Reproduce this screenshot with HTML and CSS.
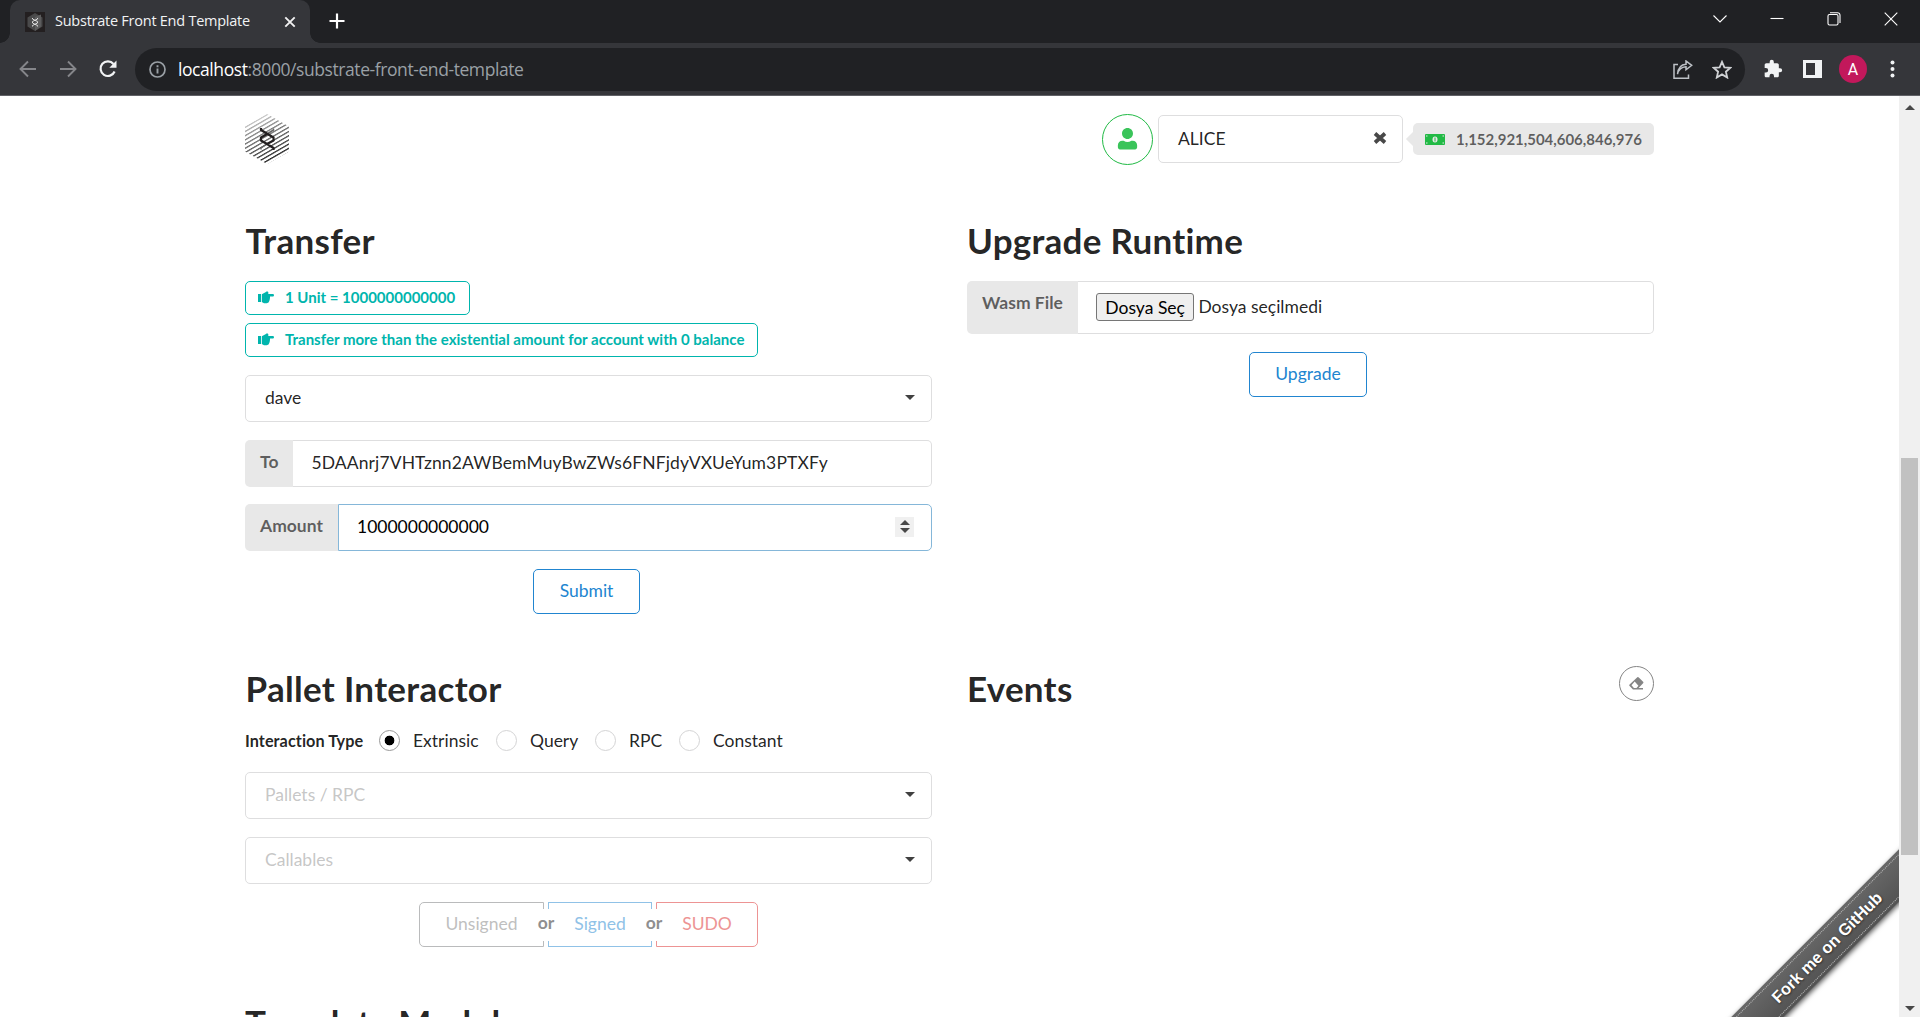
FILE: index.html
```html
<!DOCTYPE html>
<html lang="en">
<head>
<meta charset="utf-8">
<title>Substrate Front End Template</title>
<link rel="stylesheet" href="styles.css">
</head>
<body>
<div class="browser">
  <header class="tabstrip">
    <div class="tab">
      <svg class="favicon" viewBox="0 0 20 20"><rect width="20" height="20" fill="#231f20"/><path d="M10 1l7.500 4.500v9L10 19l-7.500-4.500v-9z" fill="#4a4a4b"/><path d="M10 5l6-2.500v12L10 19z" fill="#5c5c5d"/><path d="M7.500 6v1l5 2.500v1.500l-5 2.500v1M12.500 6v1l-5 2.500v1.500l5 2.500v1" fill="none" stroke="#ddd"/></svg>
      <span class="tab-title">Substrate Front End Template</span>
      <svg class="tab-close" viewBox="0 0 12 12"><path d="M1.300 1.300l9.400 9.400M10.700 1.300l-9.400 9.400" stroke="#f1f1f1" stroke-width="1.900"/></svg>
    </div>
    <svg class="new-tab" viewBox="0 0 16 16"><path d="M8 .5v15M.5 8h15" stroke="#fff" stroke-width="2.200"/></svg>
    <div class="window-controls">
      <svg width="14" height="14" viewBox="0 0 14 14"><path d="M.5 3.500L7 10l6.500-6.500"/></svg>
      <svg width="14" height="14" viewBox="0 0 14 14"><path d="M.5 6.500h13"/></svg>
      <svg width="14" height="14" viewBox="0 0 14 14"><rect x="1" y="2.500" width="10" height="10.500" rx="1.500"/><path d="M3 .7h7.500a2.500 2.500 0 0 1 2.500 2.500V11"/></svg>
      <svg width="14" height="14" viewBox="0 0 14 14"><path d="M.7.700l12.600 12.600M13.300.7L.7 13.300"/></svg>
    </div>
  </header>
  <nav class="toolbar">
    <svg class="nav-arrow" viewBox="0 0 18 18"><path d="M17 9H2M9 1.500L1.500 9 9 16.500"/></svg>
    <svg class="nav-arrow" viewBox="0 0 18 18"><path d="M1 9h15M9 1.500L16.500 9 9 16.500"/></svg>
    <svg class="reload" viewBox="0 0 18 18"><path d="M15.600 11.500A7.300 7.300 0 1 1 14.500 4" fill="none" stroke="#f1f3f4" stroke-width="2.200"/><path d="M17.500.5v7.200h-7.200z" fill="#f1f3f4"/></svg>
    <div class="omnibox">
      <svg class="info" viewBox="0 0 17 17"><circle cx="8.500" cy="8.500" r="7.500" fill="none" stroke="#9aa0a6" stroke-width="1.700"/><path d="M8.500 7.500v5M8.500 4.200v2" stroke="#9aa0a6" stroke-width="1.900"/></svg>
      <span class="url"><b>localhost</b>:8000/substrate-front-end-template</span>
      <svg class="share" viewBox="0 0 20 19"><path d="M5 4.500H1v13.700h14.500v-3.700M4.500 14.200C5.500 9 8.500 7 13 6.700V9.800L18.700 5.300 13 1v3.200C8 4.500 5 8.500 4.500 14.200z"/></svg>
      <svg class="star" viewBox="0 0 20 19"><path d="M10 1.800l2.400 5.500 6 .5-4.500 3.900 1.300 5.800L10 14.400l-5.200 3.100 1.300-5.800L1.600 7.800l6-.5z"/></svg>
    </div>
    <svg class="puzzle" viewBox="0 0 24 24"><path d="M20.500 11H19V7c0-1.100-.9-2-2-2h-4V3.500a2.500 2.500 0 0 0-5 0V5H4c-1.100 0-2 .9-2 2v3.800h1.500a2.700 2.700 0 0 1 0 5.400H2V20c0 1.100.9 2 2 2h3.800v-1.500a2.700 2.700 0 0 1 5.400 0V22H17c1.100 0 2-.9 2-2v-4h1.500a2.500 2.500 0 0 0 0-5z"/></svg>
    <svg class="panel" viewBox="0 0 19 18"><path d="M0 0h19v18H0zM3 3v12h9V3z" fill-rule="evenodd"/></svg>
    <span class="avatar">A</span>
    <svg class="menu" viewBox="0 0 5 18"><circle cx="2.500" cy="2.500" r="2"/><circle cx="2.500" cy="9" r="2"/><circle cx="2.500" cy="15.500" r="2"/></svg>
  </nav>
  <div class="viewport">
    <main class="page">
      <div class="account-bar">
        <svg class="logo" viewBox="0 0 44 50">
          <defs>
            <clipPath id="hex"><path d="M22 0l22 12.500v25L22 50 0 37.500v-25z"/></clipPath>
            <linearGradient id="fade" x1="0" y1="0" x2=".4" y2="1"><stop offset=".1" stop-color="#ddd"/><stop offset=".4" stop-color="#888"/><stop offset="1" stop-color="#222"/></linearGradient>
            <pattern id="hatch" width="44" height="4.200" patternUnits="userSpaceOnUse" patternTransform="skewY(-30)"><rect width="44" height="1.500" fill="#fff"/></pattern>
            <mask id="lines"><rect width="44" height="50" fill="url(#hatch)"/></mask>
          </defs>
          <g clip-path="url(#hex)"><rect width="44" height="50" fill="url(#fade)" mask="url(#lines)"/></g>
          <path d="M28.500 14.500v1.500L22 20M22 30l-6 4v1.500" fill="none" stroke="#666" stroke-width="1.500"/>
          <path d="M16 14v2l12.500 7.500v3L22 30l6.500 4v2M22 20l-6 3.500v3L22 30" fill="none" stroke="#231f20" stroke-width="2.300" stroke-linejoin="round"/>
        </svg>
        <span class="user-button"><svg viewBox="0 0 448 512"><path d="M224 256c71 0 128-57 128-128S295 0 224 0 96 57 96 128s57 128 128 128zm120 40h-30a174 174 0 0 1-180 0h-30C45 296 0 340 0 400v50c0 27 21 48 48 48h352c27 0 48-21 48-48v-50c0-60-45-104-104-104z"/></svg></span>
        <div class="account-select">ALICE<svg viewBox="0 0 14 12"><path d="M2 1.500l10 9M12 1.500l-10 9" stroke="#484848" stroke-width="3.700"/></svg></div>
        <div class="balance"><svg viewBox="0 0 20 11"><rect width="20" height="11" rx="1" fill="#21ba45"/><ellipse cx="10" cy="5.500" rx="2.500" ry="3" fill="#e8e8e8"/><path d="M10 3.500v4M2 2h1M17 2h1M2 9h1M17 9h1" stroke="#21ba45"/><path d="M1 2h1.500M17.500 2H19M1 9h1.500M17.500 9H19" stroke="#e8e8e8"/></svg>1,152,921,504,606,846,976</div>
      </div>

      <div class="grid">
        <section class="transfer">
          <h1>Transfer</h1>
          <div class="hints">
            <div class="hint"><svg viewBox="0 0 16 13"><path d="M0 3h3v8H0zM3.800 3.200L7.500 1.200 9 .3l1.300.8V3h4.900q.8.200.8 1.200t-.8 1.300H12v1l-.2 1.700-.5 1.700-.8 1.600-1.700.8H6L3.800 11z"/></svg>1 Unit = 1000000000000</div>
            <div class="hint tight"><svg viewBox="0 0 16 13"><path d="M0 3h3v8H0zM3.800 3.200L7.500 1.200 9 .3l1.300.8V3h4.900q.8.200.8 1.200t-.8 1.300H12v1l-.2 1.700-.5 1.700-.8 1.600-1.700.8H6L3.800 11z"/></svg>Transfer more than the existential amount for account with 0 balance</div>
          </div>
          <div class="fields">
            <div class="dropdown"><span>dave</span><i class="caret"></i></div>
            <div class="labeled"><span class="field-label">To</span><div class="field address">5DAAnrj7VHTznn2AWBemMuyBwZWs6FNFjdyVXUeYum3PTXFy</div></div>
            <div class="labeled"><span class="field-label">Amount</span><div class="field focused">1000000000000<span class="spinner"><i class="up"></i><i class="down"></i></span></div></div>
          </div>
          <div class="actions"><span class="button submit">Submit</span></div>
        </section>
        <section class="upgrade">
          <h1>Upgrade Runtime</h1>
          <div class="labeled file"><span class="field-label">Wasm File</span><div class="field"><span class="choose">Dosya Seç</span>Dosya seçilmedi</div></div>
          <div class="actions"><span class="button upgrade-button">Upgrade</span></div>
        </section>
        <section class="interactor">
          <h1>Pallet Interactor</h1>
          <div class="radios"><b>Interaction Type</b>
            <span class="radio checked r1">Extrinsic</span><span class="radio r2">Query</span><span class="radio r3">RPC</span><span class="radio">Constant</span></div>
          <div class="fields">
            <div class="dropdown empty"><span>Pallets / RPC</span><i class="caret"></i></div>
            <div class="dropdown empty"><span>Callables</span><i class="caret"></i></div>
          </div>
          <div class="group"><span class="choice unsigned">Unsigned</span><span class="or">or</span><span class="choice signed">Signed</span><span class="or">or</span><span class="choice sudo">SUDO</span></div>
        </section>
        <section class="events">
          <h1>Events</h1>
          <span class="clear"><svg viewBox="0 0 15 13"><path d="M8.300.3q.8-.5 1.500.2l4.300 4.300q.7.700 0 1.400L9.600 11H14v1.500H4L.6 9.100q-.7-.8 0-1.500zM5.700 4.600L2.500 8.300 4.900 11h2.600l1.900-2.200z" fill-rule="evenodd"/></svg></span>
        </section>
        <section class="template"><h1>Template Module</h1></section>
      </div>
      <div class="ribbon"><span>Fork me on GitHub</span></div>
    </main>
    <aside class="scrollbar"><i class="up"></i><div class="thumb"></div><i class="down"></i></aside>
  </div>
</div>
</body>
</html>
```
FILE: styles.css
```css
* { box-sizing: border-box; }
body { margin: 0; overflow: hidden; background: #fff; font: 17.5px/25px Lato, "Liberation Sans", sans-serif; color: rgba(0,0,0,.87); }
svg { display: block; flex: none; }
.browser { height: 1017px; display: flex; flex-direction: column; overflow: hidden; }

/* Browser chrome */
.tabstrip { height: 43px; flex: none; background: #202124; display: flex; padding-left: 10px; font-family: "Open Sans", sans-serif; }
.tab { width: 300px; background: #35363a; border-radius: 10px 10px 0 0; display: flex; align-items: center; padding: 0 14px 0 15px; position: relative; }
.tab::before, .tab::after { content: ""; position: absolute; bottom: 0; width: 10px; height: 10px; }
.tab::before { left: -10px; background: radial-gradient(circle at 0 0, transparent 9.500px, #35363a 10px); }
.tab::after { right: -10px; background: radial-gradient(circle at 100% 0, transparent 9.500px, #35363a 10px); }
.favicon { width: 20px; height: 20px; }
.tab-title { width: 200px; margin-left: 10px; padding-bottom: 2px; font-size: 14.500px; letter-spacing: -.25px; color: #f1f3f4; white-space: nowrap; }
.tab-close { width: 12px; height: 12px; margin-left: 29px; }
.new-tab { width: 16px; height: 16px; margin: 13px 0 0 19px; }
.window-controls { margin: 12px 22px 0 auto; display: flex; gap: 43px; }
.window-controls svg { fill: none; stroke: #fff; stroke-width: 1.100; }
.toolbar { height: 53px; flex: none; background: #35363a; border-bottom: 1px solid #606166; display: flex; align-items: center; padding: 0 25px 0 19px; }
.nav-arrow { width: 18px; height: 18px; margin-right: 22px; fill: none; stroke: #85868a; stroke-width: 1.900; }
.reload { width: 18px; height: 18px; }
.omnibox { width: 1610px; height: 43px; margin-left: 18px; border-radius: 22px; background: #202124; display: flex; align-items: center; padding: 0 13px 0 14px; color: #9aa0a6; font-family: "Open Sans", sans-serif; }
.info { width: 17px; height: 17px; }
.url { margin-left: 12px; font-size: 17.500px; letter-spacing: -.42px; white-space: nowrap; }
.url b { color: #fff; font-weight: 400; }
.share { width: 20px; height: 19px; margin-left: auto; fill: none; stroke: #bdc1c6; stroke-width: 1.500; }
.star { width: 20px; height: 19px; margin-left: 19px; fill: none; stroke: #d0d2d5; stroke-width: 1.800; }
.puzzle { width: 20px; height: 20px; margin-left: 18px; fill: #f1f3f4; }
.panel { width: 19px; height: 18px; margin-left: 20px; fill: #f1f3f4; }
.avatar { width: 28px; height: 28px; margin-left: 17px; border-radius: 50%; background: #c2185b; color: #fff; text-align: center; font: 16px/29px Roboto, sans-serif; }
.menu { width: 5px; height: 18px; margin-left: auto; fill: #f1f3f4; }

.viewport { display: flex; flex: 1; min-height: 0; }
.page { width: 1899px; padding-left: 245px; position: relative; overflow: hidden; }
.scrollbar { width: 21px; background: #f0f0f0; display: flex; flex-direction: column; align-items: center; }
.up, .down { border: 5px solid transparent; width: 0; height: 0; }
.up { border-top: 0; border-bottom-color: #484848; }
.down { border-bottom: 0; border-top-color: #484848; }
.scrollbar .up { margin-top: 9px; }
.scrollbar .down { margin-top: auto; margin-bottom: 6px; }
.thumb { width: 17px; height: 397px; margin-top: 348px; background: #c1c1c1; }

/* Account header */
.account-bar { width: 1409px; height: 86px; display: flex; align-items: center; }
.logo { width: 44px; height: 50px; }
.user-button { width: 51px; height: 51px; margin-left: 813px; border: 1.500px solid #21ba45; border-radius: 50%; display: grid; place-items: center; }
.user-button svg { width: 21px; height: 22px; fill: #3ac45a; }
.account-select { width: 245px; height: 48px; margin-left: 5px; border: 1px solid #dededf; border-radius: 5px; display: flex; align-items: center; justify-content: space-between; padding: 0 15px 2px 19px; }
.account-select svg { width: 14px; height: 12px; }
.balance { position: relative; width: 241px; height: 32px; margin-left: 10px; border-radius: 5px; background: #e8e8e8; display: flex; align-items: center; gap: 11px; padding-left: 12px; font-size: 15px; font-weight: 700; letter-spacing: -.02px; color: rgba(0,0,0,.6); }
.balance::before { content: ""; position: absolute; left: -5px; top: 11px; width: 10px; height: 10px; background: #e8e8e8; transform: rotate(45deg); }
.balance svg { width: 20px; height: 11px; }

/* Content */
.grid { display: grid; grid-template-columns: 687px 687px; grid-template-rows: 448px 334px 80px; column-gap: 35px; padding-top: 38px; }
h1 { margin: -2px 0 0; padding-bottom: 2px; font-size: 35px; line-height: 45px; font-weight: 700; letter-spacing: .25px; }
section { position: relative; display: flow-root; }
.transfer h1, .interactor h1 { padding-left: .5px; letter-spacing: .3px; }
.hints { display: flex; flex-direction: column; align-items: flex-start; gap: 8px; margin-top: 16px; }
.hint { height: 34px; border: 1px solid #00b5ad; border-radius: 5px; color: #00b5ad; font-size: 15px; font-weight: 700; display: flex; align-items: center; gap: 11px; padding: 0 14px 2px 12px; white-space: nowrap; }
.hint.tight { padding-right: 12.500px; letter-spacing: .015px; }
.hint svg { width: 16px; height: 13px; fill: #00b5ad; }
.fields { display: flex; flex-direction: column; gap: 18px; margin-top: 18px; }
.transfer .fields { gap: 17.500px; }
.dropdown { height: 47px; border: 1px solid #dededf; border-radius: 5px; display: flex; align-items: center; justify-content: space-between; padding: 0 16px 2px 19px; }
.dropdown.empty { color: rgba(191,191,191,.9); }
.caret { border: 5px solid transparent; border-top-color: #404040; border-bottom: 0; }
.labeled { height: 47px; display: flex; }
.field-label { background: #e8e8e8; border-radius: 5px 0 0 5px; padding: 9px 15px; font-weight: 700; color: rgba(0,0,0,.6); white-space: nowrap; }
.field { flex: 1; border: 1px solid #dededf; border-left: 0; border-radius: 0 5px 5px 0; display: flex; align-items: center; padding: 0 17px 2px 19px; white-space: nowrap; }
.field.address { letter-spacing: .12px; padding-left: 18px; }
.field.focused { border: 1px solid #85b7d9; color: #000; padding-left: 18px; }
.spinner { width: 19px; height: 20px; margin-left: auto; background: #f0f0f0; display: flex; flex-direction: column; align-items: center; justify-content: center; gap: 3px; }
.actions { display: flex; margin-top: 18px; }
.button { height: 45px; border: 1.500px solid #2185d0; border-radius: 5px; color: #2185d0; text-align: center; line-height: 41px; }
.submit { width: 107px; margin-left: 288px; }
.upgrade-button { width: 118px; margin-left: 282px; }
.file { height: 53px; margin-top: 16px; }
.file .field { padding-left: 18px; }
.choose { height: 28px; border: 1px solid #767676; border-radius: 3px; background: #efefef; color: #000; padding: 0 8.500px; margin-right: 4px; line-height: 28px; }

.radios { height: 25px; margin-top: 15px; display: flex; align-items: center; }
.radios b { width: 134px; font-size: 16.250px; letter-spacing: .05px; white-space: nowrap; }
.radio { display: flex; align-items: center; gap: 13px; }
.radio::before { content: ""; width: 19px; height: 19px; border: 1px solid #d4d4d5; border-radius: 50%; }
.radio.checked::before { border-color: #999; background: radial-gradient(circle, #000 4.500px, #fff 5.200px); }
.r1 { width: 117px; } .r2 { width: 99px; } .r3 { width: 84px; }
.interactor .fields { margin-top: 19px; }
.group { display: flex; margin: 18px 0 0 174px; }
.choice { height: 45px; border: 1.500px solid #babbbc; line-height: 41px; text-align: center; }
.unsigned { width: 125px; border-radius: 5px 0 0 5px; color: #bfbfbf; }
.signed { width: 104px; border-color: #90c2e7; color: #90c2e7; }
.sudo { width: 102px; border-color: #ed9494; border-radius: 0 5px 5px 0; color: #ed9494; }
.or { position: relative; z-index: 1; width: 22px; height: 32px; margin: 7px -9px 0; background: #fff; color: #8f8f8f; font-weight: 700; text-align: center; line-height: 28px; }
.clear { position: absolute; right: 0; top: -2px; width: 35px; height: 35px; border: 1.500px solid #858585; border-radius: 50%; display: grid; place-items: center; }
.clear svg { width: 15px; height: 13px; fill: #858585; }

.template { height: 80px; }
.ribbon { position: absolute; left: 1677px; top: 833px; width: 300px; height: 37px; transform: rotate(-45deg); background: linear-gradient(#676767, #525252); box-shadow: 0 2px 5px rgba(0,0,0,.65); padding: 3px 0; }
.ribbon span { display: block; height: 31px; border: 1px dotted #bbb; border-width: 1px 0; color: #fff; text-align: center; font: 700 16.500px/29px "Liberation Sans", sans-serif; text-shadow: 0 1px 2px #222; }
```
